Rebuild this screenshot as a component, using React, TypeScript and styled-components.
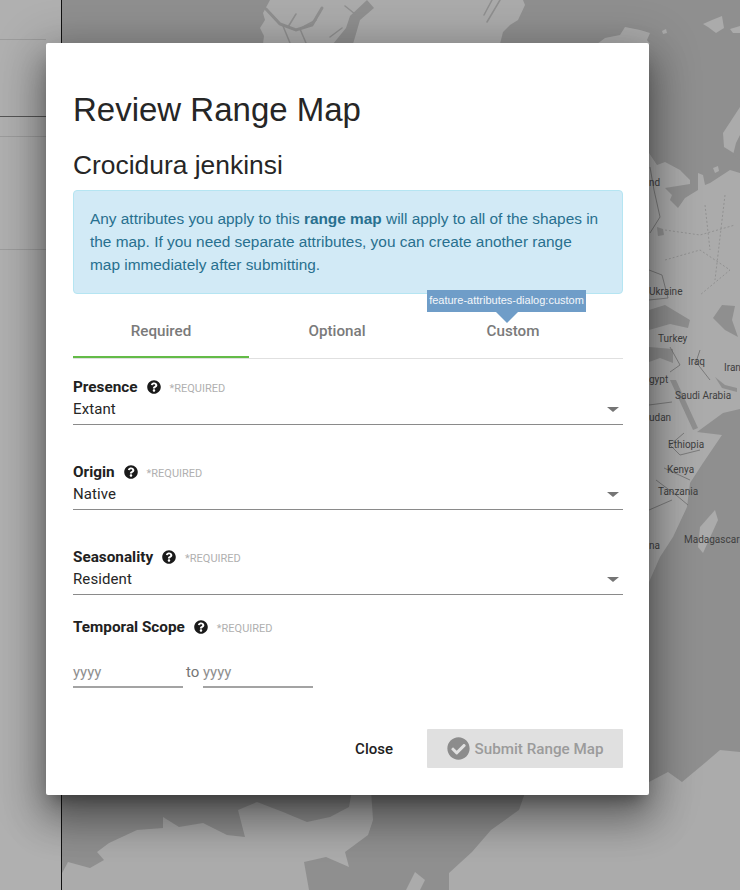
import React from 'react';
import styled, { createGlobalStyle } from 'styled-components';
import { FaCheckCircle, FaQuestionCircle } from 'react-icons/fa';

const GlobalStyle = createGlobalStyle`
  html, body {
    margin: 0;
    padding: 0;
    overflow: hidden;
    background: #8f8f8f;
  }
  * {
    box-sizing: border-box;
  }
`;

const Stage = styled.div`
  width: 740px;
  height: 890px;
  position: relative;
  overflow: hidden;
  font-family: Roboto, sans-serif;
  color: #212121;
`;
const MapCanvas = styled.svg`
  position: absolute;
  top: 0;
  left: 0;
`;
const Overlay = styled.div`
  position: absolute;
  inset: 0;
  padding: 43px 91px 0 46px;
`;
const Modal = styled.div`
  width: 603px;
  height: 752px;
  padding: 45px 26px 0 27px;
  background: #fff;
  border-radius: 2px;
  box-shadow: 0 24px 38px 3px rgba(0, 0, 0, 0.28), 0 9px 46px 8px rgba(0, 0, 0, 0.22),
    0 11px 15px -7px rgba(0, 0, 0, 0.35);
`;
const Title = styled.h1`
  margin: 0;
  font: 400 33px/44px 'Liberation Sans', Arial, sans-serif;
  color: #262626;
`;
const Species = styled.h2`
  margin: 16px 0 0;
  font: 400 26.4px/34px 'Liberation Sans', Arial, sans-serif;
  color: #262626;
`;
const Notice = styled.div`
  margin-top: 8px;
  height: 104px;
  padding: 16px 22px 0 16px;
  background: #d2eaf6;
  border: 1px solid #b5e5f2;
  border-radius: 4px;
  font: 400 15.4px/23px 'Liberation Sans', Arial, sans-serif;
  color: #28708f;
  b {
    font-weight: 700;
  }
`;
const Tabs = styled.div`
  display: flex;
  height: 65px;
  position: relative;
  border-bottom: 1px solid #e0e0e0;
`;
const Tab = styled.div<{ $active?: boolean }>`
  width: 176px;
  height: 64px;
  padding-top: 28px;
  text-align: center;
  font-size: 15.2px;
  line-height: 18px;
  font-weight: 500;
  color: #7a7a7a;
  border-bottom: 2px solid ${p => (p.$active ? '#63bb47' : 'transparent')};
`;
const Tooltip = styled.div`
  position: absolute;
  top: -4px;
  left: 354px;
  height: 22px;
  width: 159px;
  background: #6f9dc8;
  color: #f4f7fa;
  font: 400 11px/21px 'Liberation Sans', Arial, sans-serif;
  text-align: center;
  white-space: nowrap;
  &::after {
    content: '';
    position: absolute;
    top: 22px;
    left: 69px;
    border-style: solid;
    border-width: 11px 11px 0;
    border-color: #6f9dc8 transparent transparent;
  }
`;
const FieldList = styled.div`
  padding-top: 18px;
`;
const Field = styled.div<{ $gap: number }>`
  margin-bottom: ${p => p.$gap}px;
`;
const LabelRow = styled.div`
  display: flex;
  align-items: center;
  height: 20px;
`;
const Label = styled.span`
  font-size: 15.3px;
  font-weight: 700;
  color: #212121;
`;
const Help = styled(FaQuestionCircle)`
  margin-left: 9px;
  width: 14px;
  height: 14px;
  color: #1a1a1a;
`;
const Required = styled.span`
  margin-left: 9px;
  font-size: 11px;
  color: #b0b0b0;
  padding-top: 2px;
`;
const SelectBox = styled.div`
  height: 28px;
  display: flex;
  align-items: center;
  justify-content: space-between;
  padding: 0 4px 3px 0;
  border-bottom: 1px solid #8a8a8a;
  font-size: 15px;
  color: #262626;
  letter-spacing: 0.1px;
`;
const Caret = styled.span`
  border-style: solid;
  border-width: 5px 6px 0;
  border-color: #757575 transparent transparent;
`;
const YearRow = styled.div`
  display: flex;
  align-items: flex-end;
  margin-top: 18px;
  height: 33px;
`;
const YearInput = styled.div`
  width: 110px;
  height: 33px;
  padding-top: 7px;
  border-bottom: 2px solid #a3a3a3;
  font-size: 15px;
  line-height: 20px;
  color: #8f8f8f;
`;
const YearJoin = styled.span`
  width: 20px;
  height: 26px;
  padding-left: 3px;
  font-size: 15px;
  line-height: 20px;
  color: #757575;
`;
const Footer = styled.div`
  display: flex;
  justify-content: flex-end;
  align-items: center;
  margin-top: 41px;
`;
const CloseButton = styled.div`
  margin-right: 34px;
  font-size: 15px;
  font-weight: 500;
  color: #212121;
`;
const SubmitButton = styled.div`
  width: 196px;
  height: 39px;
  display: flex;
  align-items: center;
  justify-content: center;
  gap: 5px;
  background: #e0e0e0;
  border-radius: 1px;
  font-size: 15.2px;
  font-weight: 500;
  color: #9b9b9b;
`;
const SubmitIcon = styled(FaCheckCircle)`
  width: 23px;
  height: 23px;
  color: #8c8c8c;
`;

const PLACES: [string, number, number][] = [
  ['nd', 649, 186],
  ['Ukraine', 649, 295],
  ['Turkey', 658, 342],
  ['Iraq', 688, 365],
  ['Iran', 724, 371],
  ['gypt', 649, 383],
  ['Saudi Arabia', 675, 399],
  ['udan', 649, 421],
  ['Ethiopia', 668, 448],
  ['Kenya', 667, 473],
  ['Tanzania', 658, 495],
  ['Madagascar', 684, 543],
  ['na', 649, 549],
];

const WorldMap = () => (
  <MapCanvas width="740" height="890" viewBox="0 0 740 890">
    <rect width="740" height="890" fill="#8f8f8f" />
    <g fill="#ababab">
      {/* arctic coast along the top of the map */}
      <path d="M270 0L523 0L525 5L518 20L510 25L503 32L500 44L263 44L264 36L260 28L265 20L263 13Z" />
      <path d="M597 44L605 38L620 35L625 27L640 30L650 33L647 40L650 44Z" />
      <path d="M703 24L712 20L722 16L724 28L716 33L708 27Z" />
      <path d="M662 31L666 29L667 33L663 34Z" />
      <path d="M730 29L740 26L740 33L733 33Z" />
      <path d="M740 107L723 133L724 147L740 157Z" />
      <path d="M713 168L718 166L719 171L715 173Z" />
      {/* russia, the middle east and east africa */}
      <path d="M649 153L657 165L665 162L680 170L690 180L690 184L665 188L672 195L670 200L678 208L685 198L698 190L698 173L703 175L705 185L710 183L730 170L740 173L740 409L723 413L697 432L722 435L703 463L690 483L687 507L673 537L660 557L649 582L600 582L600 153Z" />
      <path d="M61 890L61 875L68 862L90 868L104 860L97 852L109 843L137 830L163 828L163 817L179 827L203 823L227 835L245 837L238 810L257 802L283 812L307 822L330 817L349 807L352 790L371 790L373 820L368 835L345 852L349 867L326 857L304 862L309 890Z" />
      <path d="M449 890L449 873L472 852L491 830L519 810L526 790L649 782L668 772L682 782L706 762L720 750L740 752L740 890Z" />
      <path d="M406 890L415 872L425 880L420 890Z" />
      <path d="M715 510L718 520L703 553L698 547L700 527Z" />
    </g>
    <g fill="#8f8f8f">
      <path d="M649 310L665 305L690 320L688 328L670 324L649 330Z" />
      <path d="M713 318L722 305L735 306L732 320L738 337L725 330Z" />
      <path d="M649 347L673 349L673 363L660 358L649 362Z" />
      <path d="M670 380L676 380L698 428L693 430Z" />
      <path d="M715 377L725 385L737 388L737 392L722 388Z" />
      <path d="M657 227L663 229L664 235L658 236Z" />
      <path d="M733 155L736 143L740 135L740 160Z" />
      <path d="M367 0L374 8L360 20L353 44L333 44L346 28L350 16Z" />
    </g>
    <g fill="none" stroke="#8f8f8f" strokeLinecap="round">
      <path strokeWidth="3" d="M266 9L280 24L296 30L312 25L322 8" />
      <path strokeWidth="1.5" d="M288 27L296 14M283 26L290 43M300 29L306 43M303 27L316 20" />
      <path strokeWidth="1.5" d="M492 0L484 15M500 0L487 22M342 28L330 37M355 14L345 6" />
    </g>
    <g fill="none" stroke="#6e6e6e" strokeWidth="0.8">
      <path d="M650 167L654 190L660 217L650 233M649 270L662 275L668 298L649 300M700 350L696 362L710 380M670 347L680 365L670 372M649 405L672 402M684 433L670 445L680 455L700 450M664 468L690 480M656 480L676 495L688 505M649 510L672 500" />
    </g>
    <g fill="none" stroke="#808080" strokeWidth="0.6" strokeDasharray="2 2">
      <path d="M665 230L700 235L735 225M665 260L700 250L730 270L700 295M705 205L710 250M725 195L715 280" />
    </g>
    {PLACES.map(([name, x, y]) => (
      <text key={name} x={x} y={y} fontFamily="Roboto, sans-serif" fontSize="10" fill="#3f3f3f">
        {name}
      </text>
    ))}
    <rect x="0" y="0" width="61" height="890" fill="#b0b0b0" />
    <rect x="61" y="0" width="1" height="890" fill="#111" />
    <g fill="#9c9c9c">
      <rect y="39" width="46" height="1" />
      <rect y="136" width="46" height="1" />
      <rect y="249" width="46" height="1" />
    </g>
    <rect y="116" width="46" height="1" fill="#555" />
  </MapCanvas>
);

const FIELDS = [
  { label: 'Presence', value: 'Extant', gap: 37 },
  { label: 'Origin', value: 'Native', gap: 37 },
  { label: 'Seasonality', value: 'Resident', gap: 22 },
];

const App = () => (
  <Stage>
    <GlobalStyle />
    <WorldMap />
    <Overlay>
      <Modal>
        <Title>Review Range Map</Title>
        <Species>Crocidura jenkinsi</Species>
        <Notice>
          Any attributes you apply to this <b>range map</b> will apply to all of the shapes in the map. If
          you need separate attributes, you can create another range map immediately after submitting.
        </Notice>
        <Tabs>
          <Tab $active>Required</Tab>
          <Tab>Optional</Tab>
          <Tab>Custom</Tab>
          <Tooltip>feature-attributes-dialog:custom</Tooltip>
        </Tabs>
        <FieldList>
          {FIELDS.map(f => (
            <Field key={f.label} $gap={f.gap}>
              <LabelRow>
                <Label>{f.label}</Label>
                <Help />
                <Required>*REQUIRED</Required>
              </LabelRow>
              <SelectBox>
                {f.value}
                <Caret />
              </SelectBox>
            </Field>
          ))}
          <LabelRow>
            <Label>Temporal Scope</Label>
            <Help />
            <Required>*REQUIRED</Required>
          </LabelRow>
          <YearRow>
            <YearInput>yyyy</YearInput>
            <YearJoin>to</YearJoin>
            <YearInput>yyyy</YearInput>
          </YearRow>
        </FieldList>
        <Footer>
          <CloseButton>Close</CloseButton>
          <SubmitButton>
            <SubmitIcon />
            Submit Range Map
          </SubmitButton>
        </Footer>
      </Modal>
    </Overlay>
  </Stage>
);

export default App;
